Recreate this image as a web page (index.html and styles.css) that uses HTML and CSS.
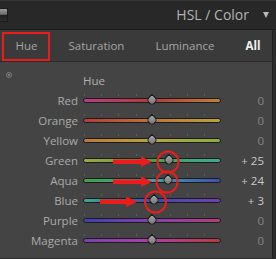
FILE: index.html
```html
<!DOCTYPE html>
<html lang="en">
  <head>
    <meta charset="UTF-8" />
    <title>HSL / Color</title>
    <link rel="stylesheet" href="styles.css">
  </head>
  <body>
    <div class="panel">
      <header class="panel-head">
        <span class="switch"></span>
        <h2 class="panel-title">HSL / Color</h2>
        <span class="caret"></span>
      </header>
      <nav class="tabs">
        <span class="tab tab-marked">Hue</span>
        <span class="tab-sep"></span>
        <span class="tab">Saturation</span>
        <span class="tab-sep"></span>
        <span class="tab">Luminance</span>
        <span class="tab-sep"></span>
        <span class="tab tab-active">All</span>
      </nav>
      <section class="sliders">
        <div class="row row-title">
          <span class="target"></span>
          <span class="group-name">Hue</span>
        </div>
        <div class="row">
          <span class="label">Red</span>
          <span class="track track-red"><span class="thumb" style="left:50%"></span></span>
          <span class="value">0</span>
        </div>
        <div class="row">
          <span class="label">Orange</span>
          <span class="track track-orange"><span class="thumb" style="left:50%"></span></span>
          <span class="value">0</span>
        </div>
        <div class="row">
          <span class="label">Yellow</span>
          <span class="track track-yellow"><span class="thumb" style="left:50%"></span></span>
          <span class="value">0</span>
        </div>
        <div class="row">
          <span class="label">Green</span>
          <span class="track track-green"><span class="thumb" style="left:62.5%"></span></span>
          <span class="value value-set">+ 25</span>
        </div>
        <div class="row">
          <span class="label">Aqua</span>
          <span class="track track-aqua"><span class="thumb" style="left:62%"></span></span>
          <span class="value value-set">+ 24</span>
        </div>
        <div class="row">
          <span class="label">Blue</span>
          <span class="track track-blue"><span class="thumb" style="left:51.5%"></span></span>
          <span class="value value-set">+ 3</span>
        </div>
        <div class="row">
          <span class="label">Purple</span>
          <span class="track track-purple"><span class="thumb" style="left:50%"></span></span>
          <span class="value">0</span>
        </div>
        <div class="row">
          <span class="label">Magenta</span>
          <span class="track track-magenta"><span class="thumb" style="left:50%"></span></span>
          <span class="value">0</span>
        </div>
      </section>

      <!-- red callouts drawn over the screenshot -->
      <svg class="marks" width="276" height="259" viewBox="0 0 276 259">
        <g fill="#ec1c1c">
          <rect x="113" y="159.5" width="30" height="4.5" />
          <polygon points="141,156.5 152,161.7 141,167" />
          <rect x="113" y="179.5" width="30" height="4.5" />
          <polygon points="141,176.5 152,181.7 141,187" />
          <rect x="100" y="199.5" width="28" height="4.5" />
          <polygon points="126,196.5 137.5,201.7 126,207" />
        </g>
        <g fill="none" stroke="#ec1c1c" stroke-width="2">
          <circle cx="168" cy="162" r="10.5" />
          <circle cx="167" cy="182" r="10.5" />
          <circle cx="155.5" cy="202" r="10.5" />
        </g>
      </svg>
    </div>
  </body>
</html>
```

FILE: styles.css
```css
* {
  box-sizing: border-box;
}

html,
body {
  margin: 0;
  padding: 0;
}

body {
  width: 276px;
  height: 259px;
  overflow: hidden;
  background: #2c2c2c;
  font-family: "Open Sans", "Liberation Sans", sans-serif;
  font-size: 11.5px;
  color: #ababab;
}

.panel {
  position: relative;
  width: 276px;
  height: 259px;
}

/* header */
.panel-head {
  display: flex;
  align-items: center;
  height: 30px;
  background: #282828;
  border-top: 1px solid #333;
  border-bottom: 1px solid #1d1d1d;
}

.switch {
  width: 8px;
  height: 14px;
  margin-top: -1px;
  border: 1px solid #1a1a1a;
  border-left: 0;
  background: linear-gradient(#9a9a9a, #6c6c6c 45%, #1e1e1e 50%, #2e2e2e);
}

.panel-title {
  margin: 0 0 0 auto;
  font-size: 14px;
  font-weight: normal;
  color: #b3b3b3;
  line-height: 1;
}

.caret {
  width: 0;
  height: 0;
  margin: 0 7px 1px 14px;
  border-left: 3.5px solid transparent;
  border-right: 3.5px solid transparent;
  border-top: 6px solid #b8b8b8;
}

/* tab bar */
.tabs {
  display: flex;
  align-items: center;
  width: 273px;
  height: 32px;
  background: #3a3a3a;
  border-right: 1px solid #1f1f1f;
  border-bottom: 1px solid #2b2b2b;
}

.tab {
  position: relative;
  display: flex;
  align-items: center;
  justify-content: center;
  height: 100%;
  padding: 0 15.5px;
  color: #a6a6a6;
}

.tab-active {
  flex: 1;
  color: #f2f2f2;
  font-weight: bold;
}

.tab-marked::after {
  content: "";
  position: absolute;
  top: 2px;
  left: 2px;
  right: 3px;
  bottom: 0;
  border: 2px solid #ec1c1c;
}

.tab-sep {
  width: 1px;
  height: 12px;
  background: #585858;
}

/* slider rows */
.sliders {
  width: 273px;
  height: 196px;
  padding-top: 8px;
  background: #444;
  border-right: 1px solid #1f1f1f;
}

.row {
  display: grid;
  grid-template-columns: 78px 138px 38px;
  column-gap: 5px;
  align-items: center;
  height: 20px;
}

.row-title {
  position: relative;
}

.target {
  justify-self: start;
  align-self: start;
  width: 6px;
  height: 6px;
  margin: 2px 0 0 6px;
  border: 1px solid #7a7a7a;
  border-radius: 50%;
  background: radial-gradient(#7a7a7a 25%, transparent 30%);
}

.group-name {
  color: #b0b0b0;
}

.label {
  text-align: right;
}

.value {
  text-align: right;
  color: #858585;
}

.value-set {
  color: #c9c9c9;
}

.track {
  position: relative;
  height: 5px;
  border: 1px solid #1c1c1c;
  border-radius: 3px;
}

.track::before {
  content: "";
  position: absolute;
  left: 0;
  right: 0;
  top: -5px;
  height: 2px;
  background: repeating-linear-gradient(90deg, #5c5c5c 0 1px, transparent 1px 17.2px);
}

.thumb {
  position: absolute;
  top: 50%;
  width: 9px;
  height: 9px;
  border: 1px solid #1b1b1b;
  border-radius: 0 50% 50% 50%;
  background: linear-gradient(135deg, #a8a8a8, #707070);
  transform: translate(-50%, -50%) rotate(45deg);
}

.track-red { background: linear-gradient(90deg, #b43f86, #b83a3a 50%, #c0803a); }
.track-orange { background: linear-gradient(90deg, #b83c38, #c0733a 50%, #b8a43c); }
.track-yellow { background: linear-gradient(90deg, #c0773a, #b8a43c 50%, #86ae3e); }
.track-green { background: linear-gradient(90deg, #a2a63e, #4aa04a 50%, #3ea896); }
.track-aqua { background: linear-gradient(90deg, #44a048, #3ea4a6 50%, #3e50ae); }
.track-blue { background: linear-gradient(90deg, #3ea694, #3e4cb0 50%, #7040b0); }
.track-purple { background: linear-gradient(90deg, #4040b0, #8640b0 50%, #b43e7a); }
.track-magenta { background: linear-gradient(90deg, #7c40b0, #b040a8 50%, #b83c3c); }

.marks {
  position: absolute;
  top: 0;
  left: 0;
  pointer-events: none;
}
```
